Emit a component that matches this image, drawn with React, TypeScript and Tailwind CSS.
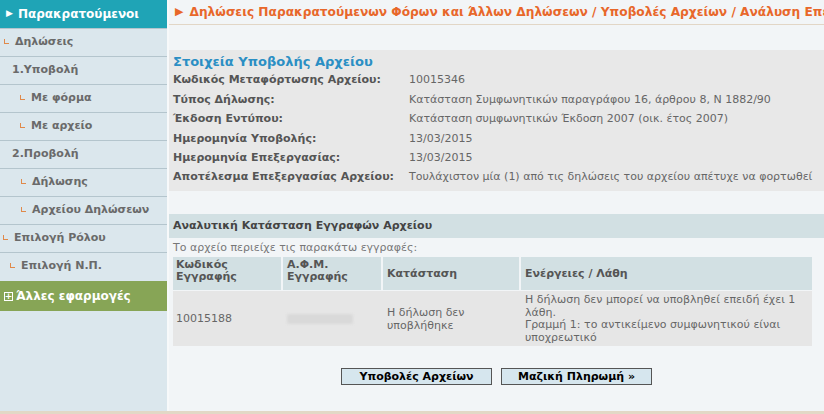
import React from "react";

const font = { fontFamily: '"DejaVu Sans", Verdana, sans-serif' };

function Corner() {
  return <span className="inline-block w-[5px] h-[5px] border-l border-b border-[#e0894a] mr-[6px] mb-[3px]" />;
}

type Item = { label: string; indent: number; corner: boolean };

const items: Item[] = [
  { label: "Δηλώσεις", indent: 4, corner: true },
  { label: "1.Υποβολή", indent: 12, corner: false },
  { label: "Με φόρμα", indent: 20, corner: true },
  { label: "Με αρχείο", indent: 20, corner: true },
  { label: "2.Προβολή", indent: 12, corner: false },
  { label: "Δήλωσης", indent: 21, corner: true },
  { label: "Αρχείου Δηλώσεων", indent: 21, corner: true },
  { label: "Επιλογή Ρόλου", indent: 3, corner: true },
  { label: "Επιλογή Ν.Π.", indent: 10, corner: true },
];

const info: [string, string][] = [
  ["Κωδικός Μεταφόρτωσης Αρχείου:", "10015346"],
  ["Τύπος Δήλωσης:", "Κατάσταση Συμφωνητικών παραγράφου 16, άρθρου 8, Ν 1882/90"],
  ["Έκδοση Εντύπου:", "Κατάσταση συμφωνητικών Έκδοση 2007 (οικ. έτος 2007)"],
  ["Ημερομηνία Υποβολής:", "13/03/2015"],
  ["Ημερομηνία Επεξεργασίας:", "13/03/2015"],
  ["Αποτέλεσμα Επεξεργασίας Αρχείου:", "Τουλάχιστον μία (1) από τις δηλώσεις του αρχείου απέτυχε να φορτωθεί"],
];

export default function App() {
  return (
    <div style={font} className="w-[824px] h-[414px] overflow-hidden flex bg-[#f2f5f7] relative">
      {/* Sidebar */}
      <div className="w-[169px] shrink-0 bg-[#dbe7ed] flex flex-col border-r-2 border-[#f7f9fa]">
        <div className="h-[28px] bg-[#1fa4b6] flex items-center pl-[6px] text-white font-bold text-[12px]">
          <span className="text-[9px] mr-[5px]">▶</span>Παρακρατούμενοι
        </div>
        {items.map((it) => (
          <div
            key={it.label}
            className="h-[28px] border-t border-[#b4c5cd] flex items-center text-[11px] font-bold text-[#6a6a6a]"
            style={{ paddingLeft: it.indent }}
          >
            {it.corner && <Corner />}
            {it.label}
          </div>
        ))}
        <div className="h-[30px] mt-[1px] bg-[#87a556] flex items-center pl-[4px] text-white font-bold text-[12px]">
          <span className="inline-flex items-center justify-center w-[9px] h-[9px] border border-white text-[9px] leading-none mr-[3px]">+</span>
          Άλλες εφαρμογές
        </div>
      </div>

      {/* Main */}
      <div className="flex-1 min-w-0 flex flex-col">
        <div className="h-[25px] border-b border-[#e2d6c6] flex items-center pl-[6px] whitespace-nowrap overflow-hidden text-[#e8672a] font-bold text-[12.2px]">
          <span className="text-[11px] mr-[6px]">▶</span>
          Δηλώσεις Παρακρατούμενων Φόρων και Άλλων Δηλώσεων / Υποβολές Αρχείων / Ανάλυση Επεξεργασίας
        </div>

        <div className="mt-[25px] bg-[#e8e8e8] pl-[4px] pt-[2px] pb-[4px]">
          <div className="text-[13px] font-bold text-[#2b8fc4] h-[19px] leading-[19px]">Στοιχεία Υποβολής Αρχείου</div>
          {info.map(([k, v]) => (
            <div key={k} className="flex h-[19.4px] items-center text-[11px] whitespace-nowrap">
              <div className="w-[236px] shrink-0 font-bold text-[#555]">{k}</div>
              <div className="text-[#666]">{v}</div>
            </div>
          ))}
        </div>

        <div className="mt-[23px] h-[24px] bg-[#d2e0e3] flex items-center pl-[4px] text-[11px] font-bold text-[#444]">
          Αναλυτική Κατάσταση Εγγραφών Αρχείου
        </div>
        <div className="pl-[4px] h-[19px] flex items-center text-[11px] text-[#777]">
          Το αρχείο περιείχε τις παρακάτω εγγραφές:
        </div>

        <div className="ml-[4px] mr-[12px] text-[11px]">
          <div className="flex h-[33px] bg-[#f2f5f7]">
            <div className="w-[108px] bg-[#d2e0e3] px-[3px] pt-[2px] font-bold text-[#555] leading-[12px]">Κωδικός<br />Εγγραφής</div>
            <div className="w-[98px] ml-[2px] bg-[#d2e0e3] px-[4px] pt-[2px] font-bold text-[#555] leading-[12px]">Α.Φ.Μ.<br />Εγγραφής</div>
            <div className="w-[136px] ml-[2px] bg-[#d2e0e3] px-[4px] flex items-center font-bold text-[#555]">Κατάσταση</div>
            <div className="flex-1 ml-[2px] bg-[#d2e0e3] px-[4px] flex items-center font-bold text-[#555]">Ενέργειες / Λάθη</div>
          </div>
          <div className="flex h-[55px] mt-[1px] bg-[#e6e6e6] text-[#666]">
            <div className="w-[108px] px-[3px] flex items-center">10015188</div>
            <div className="w-[98px] ml-[2px] px-[4px] flex items-center">
              <div className="w-[66px] h-[10px] bg-[#d9d9d9] rounded-[2px] blur-[1px]" />
            </div>
            <div className="w-[136px] ml-[2px] px-[4px] flex items-center leading-[13px]">Η δήλωση δεν<br />υποβλήθηκε</div>
            <div className="flex-1 ml-[2px] px-[4px] leading-[12.5px] pt-[3px]">
              Η δήλωση δεν μπορεί να υποβληθεί επειδή έχει 1<br />λάθη.<br />Γραμμή 1: το αντικείμενο συμφωνητικού είναι<br />υποχρεωτικό
            </div>
          </div>
        </div>

        <div className="flex justify-center gap-[9px] mt-[22px]">
          <button className="w-[151px] h-[17px] bg-[#d6e6ee] border border-[#555] text-[11px] font-bold text-black leading-none">Υποβολές Αρχείων</button>
          <button className="w-[151px] h-[17px] bg-[#d6e6ee] border border-[#555] text-[11px] font-bold text-black leading-none">Μαζική Πληρωμή »</button>
        </div>
      </div>
      <div className="absolute left-0 right-0 bottom-0 h-[3px] bg-[#e2d8c6]" />
    </div>
  );
}
